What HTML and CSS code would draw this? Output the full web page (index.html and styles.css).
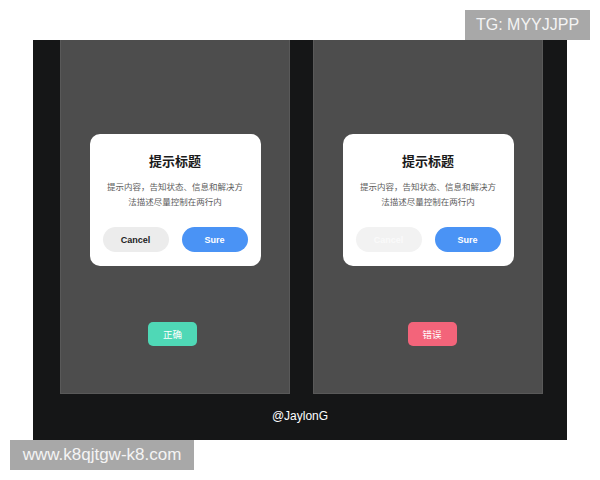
FILE: index.html
```html
<!DOCTYPE html>
<html lang="zh">
<head>
<meta charset="utf-8">
<link rel="stylesheet" href="styles.css">
</head>
<body>
<div class="frame">
  <div class="panels">
    <div class="panel">
      <div class="dialog">
        <div class="title">提示标题</div>
        <div class="desc">提示内容，告知状态、信息和解决方<br>法描述尽量控制在两行内</div>
        <div class="actions">
          <div class="btn cancel">Cancel</div>
          <div class="btn sure">Sure</div>
        </div>
      </div>
      <div class="toast ok">正确</div>
    </div>
    <div class="panel">
      <div class="dialog">
        <div class="title">提示标题</div>
        <div class="desc">提示内容，告知状态、信息和解决方<br>法描述尽量控制在两行内</div>
        <div class="actions">
          <div class="btn cancel disabled">Cancel</div>
          <div class="btn sure">Sure</div>
        </div>
      </div>
      <div class="toast err">错误</div>
    </div>
  </div>
  <div class="credit">@JaylonG</div>
</div>
<div class="mark tg">TG: MYYJJPP</div>
<div class="mark url">www.k8qjtgw-k8.com</div>
</body>
</html>
```
FILE: styles.css
```css
html, body {
  margin: 0;
  padding: 0;
  background: #ffffff;
}
body {
  width: 600px;
  height: 480px;
  position: relative;
  overflow: hidden;
  font-family: "Liberation Sans", "Noto Sans CJK SC", sans-serif;
}
.frame {
  margin: 40px 0 0 33px;
  width: 534px;
  height: 400px;
  background: #151617;
  display: flex;
  flex-direction: column;
}
.panels {
  display: flex;
  gap: 23px;
  padding: 0 24px 0 27px;
  height: 354px;
}
.panel {
  width: 230px;
  height: 354px;
  box-sizing: border-box;
  background: #4d4d4d;
  border: 1px solid #595959;
  border-top: none;
  display: flex;
  flex-direction: column;
  align-items: center;
  padding-top: 94px;
}
.dialog {
  width: 171px;
  height: 132px;
  box-sizing: border-box;
  background: #ffffff;
  border-radius: 10px;
  padding: 18px 13px 14px;
  display: flex;
  flex-direction: column;
  align-items: center;
}
.title {
  font-family: "Noto Sans CJK SC", sans-serif;
  font-weight: 700;
  font-size: 13px;
  line-height: 18px;
  color: #1a1a1a;
}
.desc {
  margin-top: 9px;
  font-family: "Noto Sans CJK SC", sans-serif;
  font-size: 8.5px;
  line-height: 15px;
  color: #5c5c5c;
  text-align: center;
  white-space: nowrap;
}
.actions {
  margin-top: 18px;
  display: flex;
  gap: 13px;
  width: 100%;
}
.btn {
  flex: 1;
  height: 25px;
  border-radius: 13px;
  display: flex;
  align-items: center;
  justify-content: center;
  font-size: 9px;
  font-weight: 700;
}
.cancel {
  background: #ececec;
  color: #1c1c1c;
}
.cancel.disabled {
  background: #f2f2f2;
  color: #fafafa;
}
.sure {
  background: #4a93f5;
  color: #ffffff;
}
.toast {
  margin-top: 56px;
  width: 49px;
  height: 24px;
  border-radius: 5px;
  display: flex;
  align-items: center;
  justify-content: center;
  font-family: "Noto Sans CJK SC", sans-serif;
  font-size: 9.5px;
  color: #ffffff;
}
.ok {
  background: #4fd8b6;
  margin-right: 5px;
}
.err {
  background: #f3647a;
  margin-left: 8px;
}
.credit {
  flex: 1;
  display: flex;
  align-items: center;
  justify-content: center;
  color: #ffffff;
  font-size: 12px;
  font-weight: 500;
  padding-bottom: 2px;
}
.mark {
  position: absolute;
  background: #a8a8a8;
  color: #f4f4f4;
  font-family: "Liberation Sans", sans-serif;
  display: flex;
  align-items: center;
}
.tg {
  left: 465px;
  top: 10px;
  width: 125px;
  height: 30px;
  justify-content: center;
  font-size: 16px;
}
.url {
  left: 10px;
  top: 440px;
  width: 184px;
  height: 30px;
  justify-content: center;
  font-size: 17px;
}
```
